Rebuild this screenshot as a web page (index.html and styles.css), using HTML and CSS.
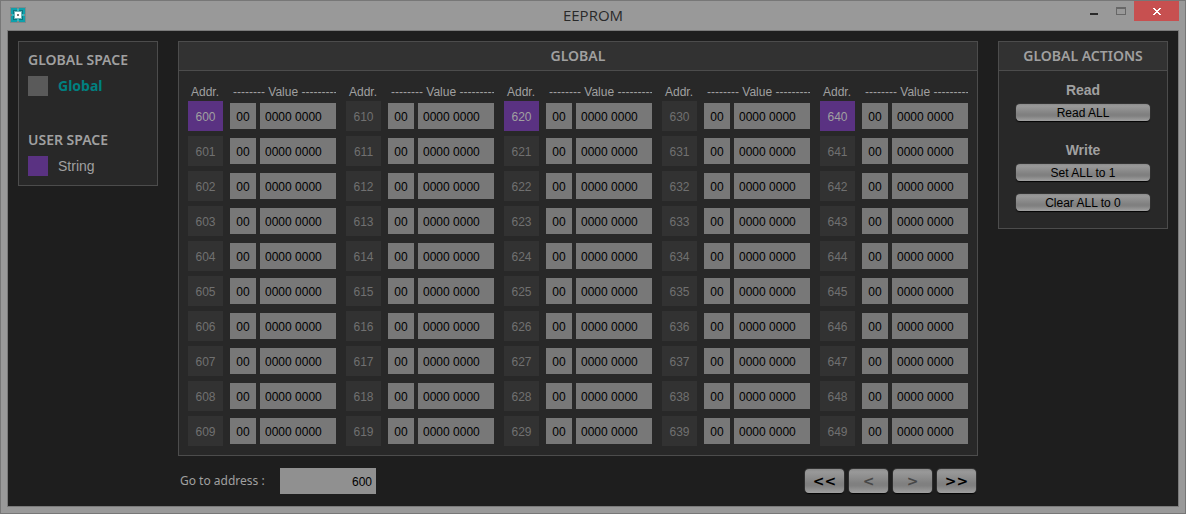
FILE: index.html
```html
<!DOCTYPE html>
<html lang="en">

<head>
    <meta charset="UTF-8">
    <meta name="viewport" content="width=device-width, initial-scale=1.0">
    <title>EEPROM</title>

    <link rel="stylesheet" href="styles.css">
</head>

<body>
    <div class="window">
        <header class="titlebar">
            <svg class="app-icon" width="16" height="16" viewBox="0 0 16 16" shape-rendering="crispEdges">
                <rect width="16" height="16" fill="#7f8a8b" />
                <path d="M1 1h6v1h2v-1h6v6h-1v2h1v6h-6v-1h-2v1h-6v-6h1v-2h-1z" fill="#0fa0ab" />
                <path d="M3 3h10v10h-10zM4 4v8h8v-8z" fill="#0b7680" fill-rule="evenodd" />
                <path d="M7 2h2v2h-2zM7 12h2v2h-2zM2 7h2v2h-2zM12 7h2v2h-2z" fill="#35b9c1" />
                <path d="M4 4h8v8h-8z" fill="#6fb4b8" />
                <path d="M5 5h6v6h-6z" fill="#fff" />
                <path d="M7 7h2v2h-2z" fill="#777" />
            </svg>
            <h1>EEPROM</h1>
            <div class="window-buttons">
                <button class="win-button" aria-label="Minimize">
                    <svg width="10" height="10" viewBox="0 0 10 10" shape-rendering="crispEdges">
                        <path d="M1 7h8v2h-8z" fill="#2a2a2a" />
                    </svg>
                </button>
                <button class="win-button" aria-label="Maximize">
                    <svg width="10" height="8" viewBox="0 0 10 8" shape-rendering="crispEdges">
                        <path d="M0 0h10v8h-10zM1 2v5h8v-5z" fill="#676767" fill-rule="evenodd" />
                    </svg>
                </button>
                <button class="win-button close" aria-label="Close">
                    <svg width="8" height="7" viewBox="0 0 8 7" shape-rendering="crispEdges">
                        <path d="M0 0h2v1h1v1h2v-1h1v-1h2v1h-1v1h-1v1h-1v1h1v1h1v1h1v1h-2v-1h-1v-1h-2v1h-1v1h-2v-1h1v-1h1v-1h1v-1h-1v-1h-1v-1h-1z" fill="#fff" />
                    </svg>
                </button>
            </div>
        </header>

        <main>
            <aside class="panel spaces">
                <h2>GLOBAL SPACE</h2>
                <div class="space active"><span class="swatch"></span>Global</div>
                <h2>USER SPACE</h2>
                <div class="space"><span class="swatch string"></span>String</div>
            </aside>

            <div class="center">
                <section class="panel">
                    <h2 class="panel-title">GLOBAL</h2>
                    <div class="memory" id="memory"></div>
                </section>

                <div class="footer">
                    <label for="goto">Go to address :</label>
                    <input type="text" id="goto" value="600">
                    <div class="pager">
                        <button>&lt;&lt;</button>
                        <button disabled>&lt;</button>
                        <button disabled>&gt;</button>
                        <button>&gt;&gt;</button>
                    </div>
                </div>
            </div>

            <aside class="panel actions">
                <h2 class="panel-title">GLOBAL ACTIONS</h2>
                <div class="action-list">
                    <h3>Read</h3>
                    <button>Read ALL</button>
                    <h3>Write</h3>
                    <button>Set ALL to 1</button>
                    <button>Clear ALL to 0</button>
                </div>
            </aside>
        </main>
    </div>

    <script src="script.js"></script>
</body>

</html>
```
FILE: styles.css
```css
* {
    box-sizing: border-box;
}

body {
    margin: 0;
    background: #999999;
    font-family: "Liberation Sans", Arial, sans-serif;
    font-size: 12px;
    color: #a0a0a0;
}

h1, h2, h3 {
    margin: 0;
}

button, input {
    font: inherit;
    border: none;
    border-radius: 0;
    outline: none;
    padding: 0;
}

.window {
    display: flex;
    flex-direction: column;
    min-height: 100vh;
    padding: 0 6px 6px;
    border: 1px solid #777777;
    background: #999999;
}

.titlebar {
    display: grid;
    grid-template-columns: 1fr auto 1fr;
    height: 29px;
}

.app-icon {
    margin: 6px 0 0 3px;
}

.titlebar h1 {
    color: #2a2a2a;
    font: 15px/29px "Open Sans", sans-serif;
}

.window-buttons {
    display: flex;
    justify-content: flex-end;
}

.win-button {
    display: flex;
    justify-content: center;
    align-items: center;
    width: 27px;
    height: 20px;
    background: none;
}

.win-button.close {
    width: 45px;
    background: #c75050;
}

main {
    flex: 1;
    display: flex;
    align-items: flex-start;
    gap: 20px;
    padding: 10px;
    border: 1px solid #7a7a7a;
    background: #1e1e1e;
}

.panel {
    border: 1px solid #4c4c4c;
    background: #282828;
}

.panel h2 {
    font: 600 14px/20px "Noto Sans", sans-serif;
}

.panel .panel-title {
    border-bottom: 1px solid #4c4c4c;
    background: #323232;
    line-height: 28px;
    text-align: center;
}

.spaces {
    width: 140px;
    padding: 8px 9px 9px;
}

.space {
    display: flex;
    align-items: center;
    gap: 10px;
    height: 20px;
    margin-top: 6px;
    font: 14px/22px "Liberation Sans", Arial, sans-serif;
}

.space.active {
    margin-bottom: 34px;
    color: #008080;
    font: bold 14px/22px "Noto Sans", sans-serif;
}

.swatch {
    width: 20px;
    height: 20px;
    background: #5a5a5a;
}

.swatch.string {
    background: #5a3282;
}

.center {
    flex: 1;
    min-width: 0;
}

.memory {
    display: flex;
    justify-content: space-between;
    padding: 12px 9px 4px;
}

.memory table {
    width: 148px;
    table-layout: fixed;
    border-collapse: collapse;
}

.memory .col-addr {
    width: 42px;
}

.memory .col-high {
    width: 30px;
}

.memory th {
    height: 18px;
    padding: 0 0 0 3px;
    overflow: hidden;
    font-weight: normal;
    text-align: left;
    white-space: nowrap;
}

.memory td {
    height: 35px;
    padding: 0 0 5px;
}

.address {
    width: 35px;
    height: 30px;
    background: #323232;
    color: #707070;
    font-size: 12px;
    line-height: 32px;
    text-align: center;
}

.address.string {
    background: #5a3282;
    color: #a0a0a0;
}

.memory input {
    display: block;
    height: 26px;
    padding-top: 2px;
    background: #787878;
    color: #000000;
}

.memory .high {
    width: 26px;
    text-align: center;
}

.memory .low {
    width: 76px;
    padding-left: 5px;
}

.footer {
    display: flex;
    align-items: center;
    padding: 12px 2px 0;
}

.footer label {
    width: 100px;
    font: 12px/20px "Noto Sans", sans-serif;
}

.footer input {
    width: 96px;
    height: 26px;
    padding: 2px 4px 0 0;
    background: #909090;
    color: #000000;
    text-align: right;
}

.pager {
    display: flex;
    gap: 5px;
    margin-left: auto;
}

.pager button,
.actions button {
    border-radius: 4px;
    background: linear-gradient(#8c8c8c, #999999 12%, #808080 60%, #808080 70%, #a0a0a0);
    box-shadow: 0 1px 1px #000000, 0 0 0 1px #333333;
    color: #000000;
}

.pager button {
    width: 39px;
    height: 24px;
    font: bold 14px/24px "DejaVu Sans", sans-serif;
}

.pager button:disabled {
    color: #484848;
}

.actions {
    width: 170px;
}

.action-list {
    padding: 9px 17px 17px;
}

.action-list h3 {
    font-size: 14px;
    line-height: 20px;
    text-align: center;
}

.action-list button {
    display: block;
    width: 100%;
    height: 17px;
    margin: 4px 0 13px;
    padding-top: 2px;
    font-size: 12px;
    line-height: 15px;
}

.action-list button + h3 {
    margin-top: 19px;
}

.action-list button:last-child {
    margin-bottom: 0;
}
```
FILE: script.js
```js
const memory = document.getElementById('memory')
const stringAddresses = [600, 620, 640]

function row(address) {
    const type = stringAddresses.includes(address) ? ' string' : ''
    return `<tr>
        <td><div class="address${type}">${address}</div></td>
        <td><input type="text" class="high" value="00" aria-label="${address} high"></td>
        <td><input type="text" class="low" value="0000 0000" aria-label="${address} low"></td>
    </tr>`
}

for (let start = 600; start < 650; start += 10) {
    let rows = ''
    for (let i = 0; i < 10; i++) {
        rows += row(start + i)
    }

    memory.innerHTML += `<table>
        <colgroup><col class="col-addr"><col class="col-high"><col></colgroup>
        <thead><tr><th>Addr.</th><th colspan="2">-------- Value ---------</th></tr></thead>
        <tbody>${rows}</tbody>
    </table>`
}
```
